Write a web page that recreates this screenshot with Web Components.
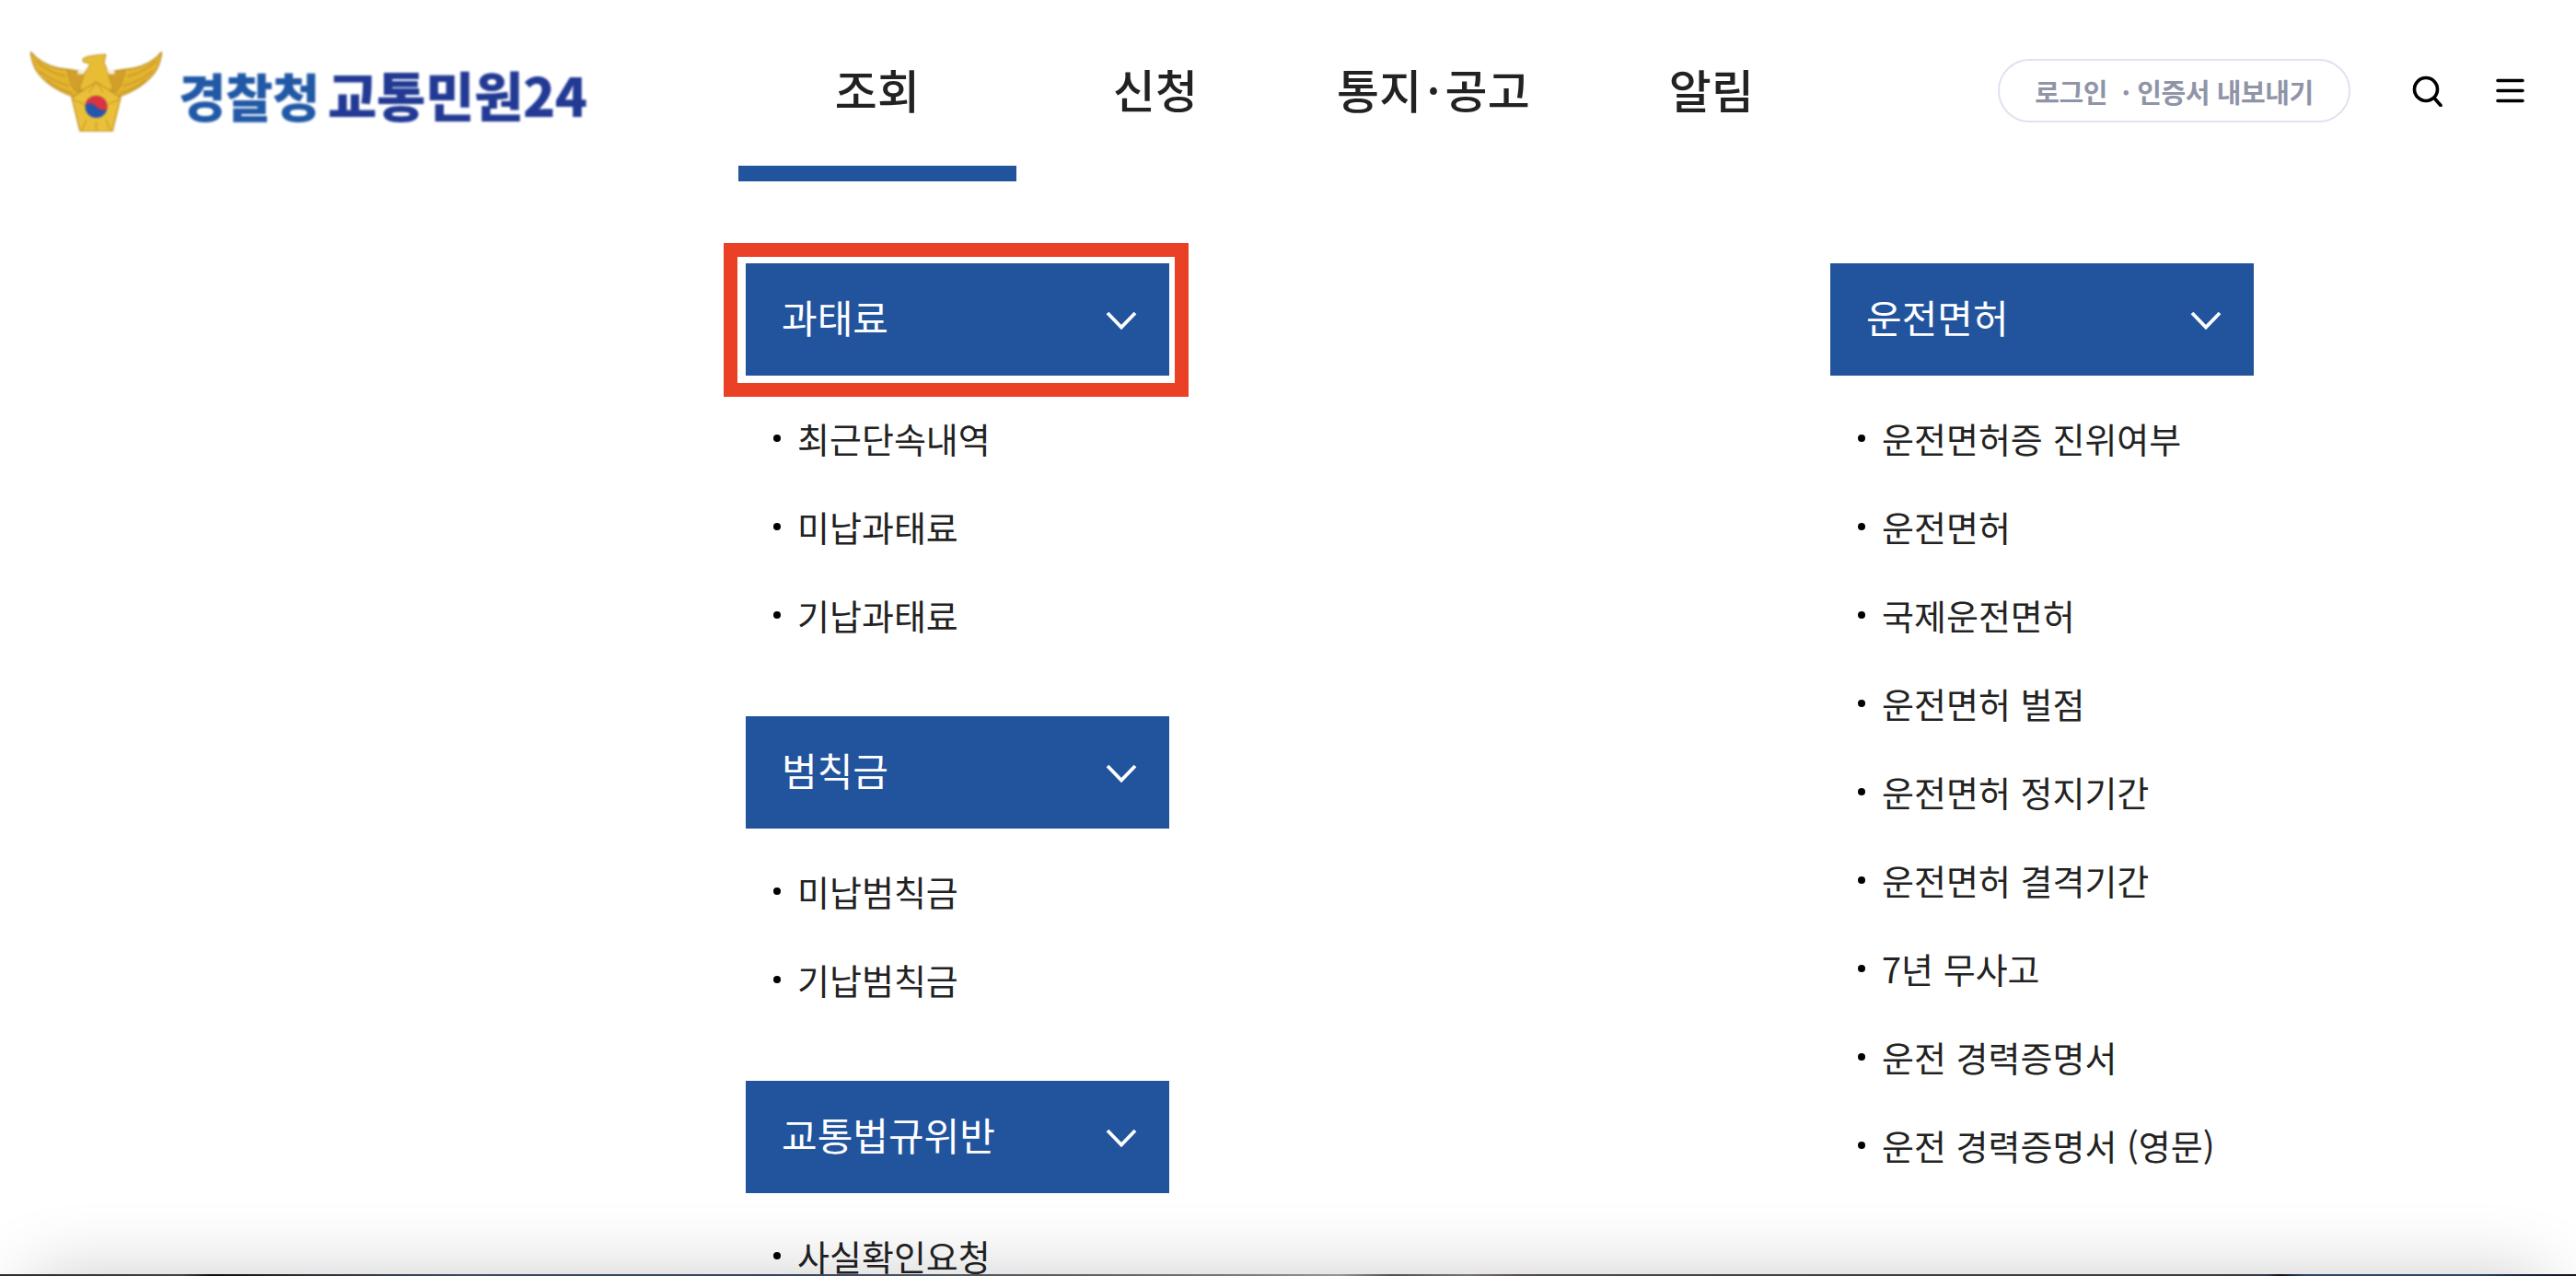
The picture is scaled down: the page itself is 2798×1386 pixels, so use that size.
<!DOCTYPE html>
<html lang="ko"><head><meta charset="utf-8"><title>경찰청 교통민원24</title>
<style>
html,body{margin:0;padding:0;height:100%;background:#fff;overflow:hidden}
body{font-family:"Noto Sans CJK KR","Noto Sans",sans-serif;color:#222}
</style></head><body>
<app-shell>
  <site-header slot="header">
    <nav-tab active>조회</nav-tab>
    <nav-tab>신청</nav-tab>
    <nav-tab>통지<span style="margin:0 5px">·</span>공고</nav-tab>
    <nav-tab>알림</nav-tab>
  </site-header>
  <menu-column slot="left">
    <menu-group title="과태료" highlighted>
      <menu-item>최근단속내역</menu-item><menu-item>미납과태료</menu-item><menu-item>기납과태료</menu-item>
    </menu-group>
    <menu-group title="범칙금">
      <menu-item>미납범칙금</menu-item><menu-item>기납범칙금</menu-item>
    </menu-group>
    <menu-group title="교통법규위반">
      <menu-item>사실확인요청</menu-item>
    </menu-group>
  </menu-column>
  <menu-column slot="right">
    <menu-group title="운전면허">
      <menu-item>운전면허증 진위여부</menu-item><menu-item>운전면허</menu-item><menu-item>국제운전면허</menu-item>
      <menu-item>운전면허 벌점</menu-item><menu-item>운전면허 정지기간</menu-item><menu-item>운전면허 결격기간</menu-item>
      <menu-item>7년 무사고</menu-item><menu-item>운전 경력증명서</menu-item><menu-item>운전 경력증명서 (영문)</menu-item>
    </menu-group>
  </menu-column>
</app-shell>
<script>
function def(name, html, setup){
  customElements.define(name, class extends HTMLElement{
    constructor(){super();this.attachShadow({mode:'open'}).innerHTML=html;}
    connectedCallback(){ if(setup) setup(this); }
  });
}
def('app-shell',`<style>
:host{display:block;position:relative;width:2798px;height:1386px;overflow:hidden;background:#fff}
.main{display:grid;grid-template-columns:460px 460px;column-gap:718px;padding:89px 0 0 810px}
.shade{position:absolute;left:34px;right:34px;top:1384px;height:200px;box-shadow:0 0 80px rgba(0,0,0,.2);pointer-events:none}
.strip{position:absolute;left:0;right:0;bottom:0;height:2px;
 background:linear-gradient(to right,#2f2b28 0,#45403b 7%,#2d2a28 7.600%,#0f0f12 8.200%,#2c3038 12%,#3b4a60 18%,#35445c 30%,#4a5460 36%,#5d6066 42%,#77746f 47%,#8a8782 50%,#98948e 52%,#55504e 54%,#7a726c 57%,#5a4a48 59%,#4c4a48 60%,#3f3d3d 72%,#3d3a3a 86%,#30384a 88%,#0f1420 88.500%,#2f4467 89.500%,#2e4468 96%,#1a2438 98%,#0d1320 100%)}
</style><slot name="header"></slot><div class="main"><slot name="left"></slot><slot name="right"></slot></div><div class="shade"></div><div class="strip"></div>`);
def('site-header',`<style>
:host{display:flex;align-items:flex-start;height:197px;box-sizing:border-box;position:relative}
.logo{display:flex;align-items:flex-start;width:802px;box-sizing:border-box;padding:56px 0 0 33px;filter:blur(.9px);flex:none}
.logo svg{width:143px;height:87px;flex:none}
.name{display:flex;align-items:baseline;gap:9px;margin:15px 0 0 18px;font-weight:900;line-height:62px;white-space:nowrap}
.a{color:#2159a6;font-size:56px;letter-spacing:-.5px}.b{color:#223a94;font-size:58px;letter-spacing:-.4px}
nav{display:flex;flex:none}
.tools{display:flex;align-items:center;margin:64px 0 0 160px;flex:none}
.pill{width:383px;height:69px;box-sizing:border-box;border:2px solid #dfe3ef;border-radius:35px;display:flex;align-items:center;justify-content:center;font-size:29px;font-weight:700;color:#8f94a7;white-space:pre;letter-spacing:-.4px}
.search{margin-left:67px;width:34px;height:34px;display:block}
.menu{margin-left:57px;width:31px;height:27px;display:block}
</style>
<div class="logo"><svg viewBox="0 0 143 87">
<path d="M0 0C8 10 18 15 30 18L58 22 62 50 44 48C28 42 14 32 6 20 3 14 1 7 0 0Z" fill="#e3b52f" stroke="#b98a22" stroke-width="1.300"/>
<path d="M143 0C135 10 125 15 113 18L85 22 81 50 99 48C115 42 129 32 137 20 140 14 142 7 143 0Z" fill="#e3b52f" stroke="#b98a22" stroke-width="1.300"/>
<path d="M6 10C16 20 26 24 38 27M10 21C20 30 30 34 42 37M18 31C26 38 36 43 46 45M137 10C127 20 117 24 105 27M133 21C123 30 113 34 101 37M125 31C117 38 107 43 97 45" stroke="#c9962a" stroke-width="1.500" fill="none"/>
<path d="M40 19 58 23 64 40 50 44C44 38 42 30 40 19ZM103 19 85 23 79 40 93 44C99 38 101 30 103 19Z" fill="#d2a02a" stroke="#b98a22" stroke-width=".8"/>
<path d="M57 8C60 5 70 4 82 3L80 12C83 18 84 22 85 26L90 40 71.500 50 53 40 58 26C60 22 62 18 65 14 62 12 59 12 57 11Z" fill="#e9bd33" stroke="#bb8c22" stroke-width="1"/>
<path d="M52 19.500h8l-2 5h-7zM91 19.500h-8l2 5h7z" fill="#f4efe0"/>
<path d="M71.500 33 98 50 89 87 54 87 45 50Z" fill="#eac038" stroke="#c0922a" stroke-width="1.300"/>
<path d="M71.500 33l8 12M71.500 33l-8 12M46 52l12 5M97 52l-12 5M56 86l5-12M87 86l-5-12M71.500 76v11" stroke="#c9992c" stroke-width="1.200"/>
<circle cx="71.500" cy="60" r="12" fill="#2456ae"/>
<path d="M59.500 60A12 12 0 0 1 83.500 60C83.500 65 76 65 72 60 68 55 60 55 59.500 60Z" fill="#dc3340"/>
</svg><div class="name"><span class="a">경찰청</span><span class="b">교통민원24</span></div></div>
<nav><slot></slot></nav>
<div class="tools"><div class="pill">로그인  · 인증서 내보내기</div>
<svg class="search" viewBox="0 0 34 34" fill="none" stroke="#000" stroke-width="3.600" stroke-linecap="round"><circle cx="15" cy="15" r="12.500"/><path d="M24 24.500 31 32.500"/></svg>
<svg class="menu" viewBox="0 0 31 27" fill="none" stroke="#000" stroke-width="3.600" stroke-linecap="round"><path d="M2 2.500H29M2 13.500H29M2 24.500H29"/></svg></div>`);
def('nav-tab',`<style>
:host{display:block;width:302px;height:197px;box-sizing:border-box;position:relative;text-align:center;font-size:50px;font-weight:500;line-height:70px;padding-top:61px;color:#222;letter-spacing:.2px}
:host([active])::after{content:"";position:absolute;left:0;right:0;bottom:0;height:17px;background:#22549e}
</style><slot></slot>`);
def('menu-column',`<style>:host{display:flex;flex-direction:column;gap:60px}</style><slot></slot>`);
def('menu-group',`<style>
:host{display:block}
.head{height:122px;background:#22549e;color:#fff;display:flex;align-items:center;justify-content:space-between;padding:0 35px 0 39px;box-sizing:border-box;font-size:42px;line-height:60px;position:relative}
.head span{position:relative;top:-3px}
svg{width:34px;height:22px;display:block;position:relative;top:1px}
.list{display:flex;flex-direction:column;padding-top:22px}
:host([highlighted]) .head::before{content:"";position:absolute;left:-24px;right:-21px;top:-22px;bottom:-23px;border:15px solid #ea4025;box-sizing:border-box;pointer-events:none}
</style><div class="head"><span id="t"></span><svg viewBox="0 0 34 22" fill="none" stroke="#fff" stroke-width="3.800"><path d="M2 3 17 18.500 32 3"/></svg></div><div class="list"><slot></slot></div>`,
 el=>{el.shadowRoot.getElementById('t').textContent=el.getAttribute('title');});
def('menu-item',`<style>
:host{display:flex;align-items:center;height:96px;box-sizing:border-box;padding:0 0 6px 30px;font-size:38px;color:#222;white-space:pre}
.dot{width:8px;height:8px;border-radius:50%;background:#000;margin-right:18px;flex:none;position:relative;top:1px}
</style><i class="dot"></i><slot></slot>`);
</script></body></html>
